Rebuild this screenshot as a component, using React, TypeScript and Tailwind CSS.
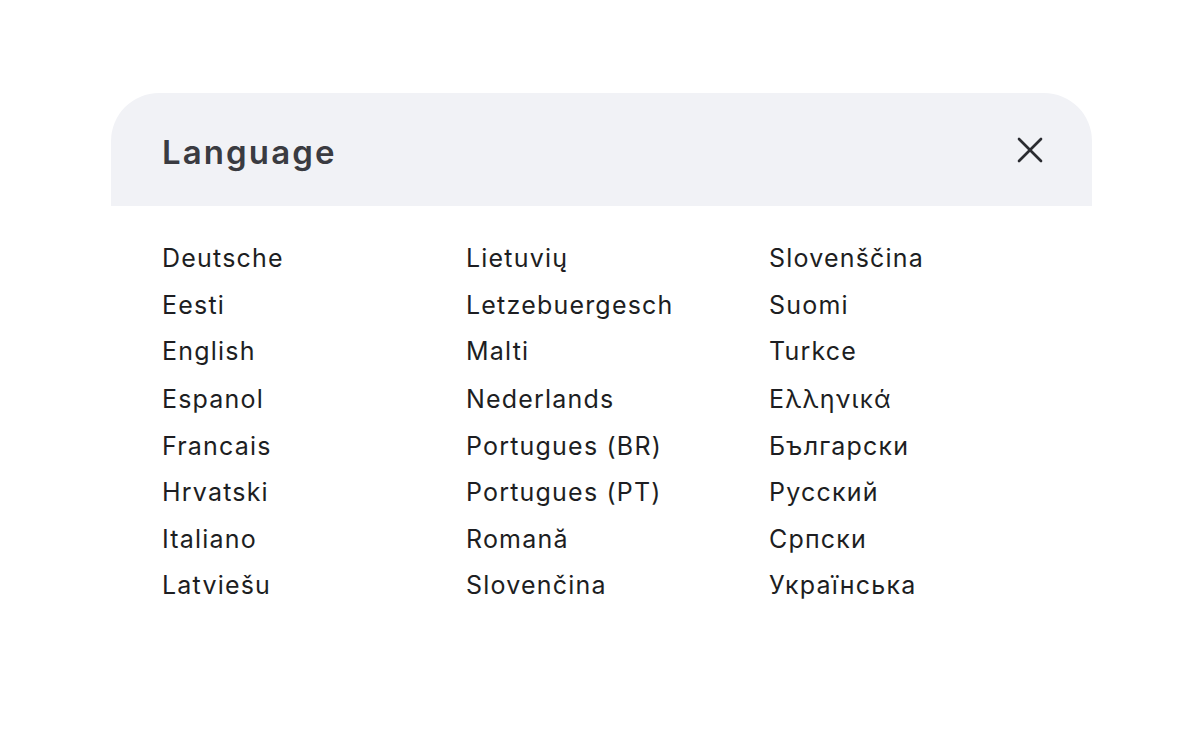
import { X } from 'lucide-react'

const cols = [
  ['Deutsche', 'Eesti', 'English', 'Espanol', 'Francais', 'Hrvatski', 'Italiano', 'Latviešu'],
  ['Lietuvių', 'Letzebuergesch', 'Malti', 'Nederlands', 'Portugues (BR)', 'Portugues (PT)', 'Romană', 'Slovenčina'],
  ['Slovenščina', 'Suomi', 'Turkce', 'Ελληνικά', 'Български', 'Русский', 'Српски', 'Українська'],
]

export default function App() {
  return (
    <div className="min-h-screen bg-white pt-[93px] pl-[111px]" style={{ fontFamily: 'Inter, "Noto Sans", sans-serif' }}>
      <div className="w-[981px]">
        {/* header */}
        <div className="h-[113px] rounded-t-[48px] bg-[#f1f2f6] px-[51px] flex items-center justify-between">
          <h2 className="mt-[6px] text-[33px] font-semibold text-[#3a3b41] tracking-[2.1px]">Language</h2>
          <button className="-mr-[11px] text-[#2b2c31]">
            <X size={44} strokeWidth={1.45} />
          </button>
        </div>

        {/* list */}
        <div className="px-[51px] pt-[29px] grid grid-cols-[304px_303px_1fr] grid-flow-col grid-rows-[48px_45px_48px_48px_45px_48px_45px_48px]">
          {cols.flat().map(l => (
            <div key={l} className="flex items-center text-[25px] text-[#1d1e22] tracking-[1.2px]">{l}</div>
          ))}
        </div>
      </div>
    </div>
  )
}
